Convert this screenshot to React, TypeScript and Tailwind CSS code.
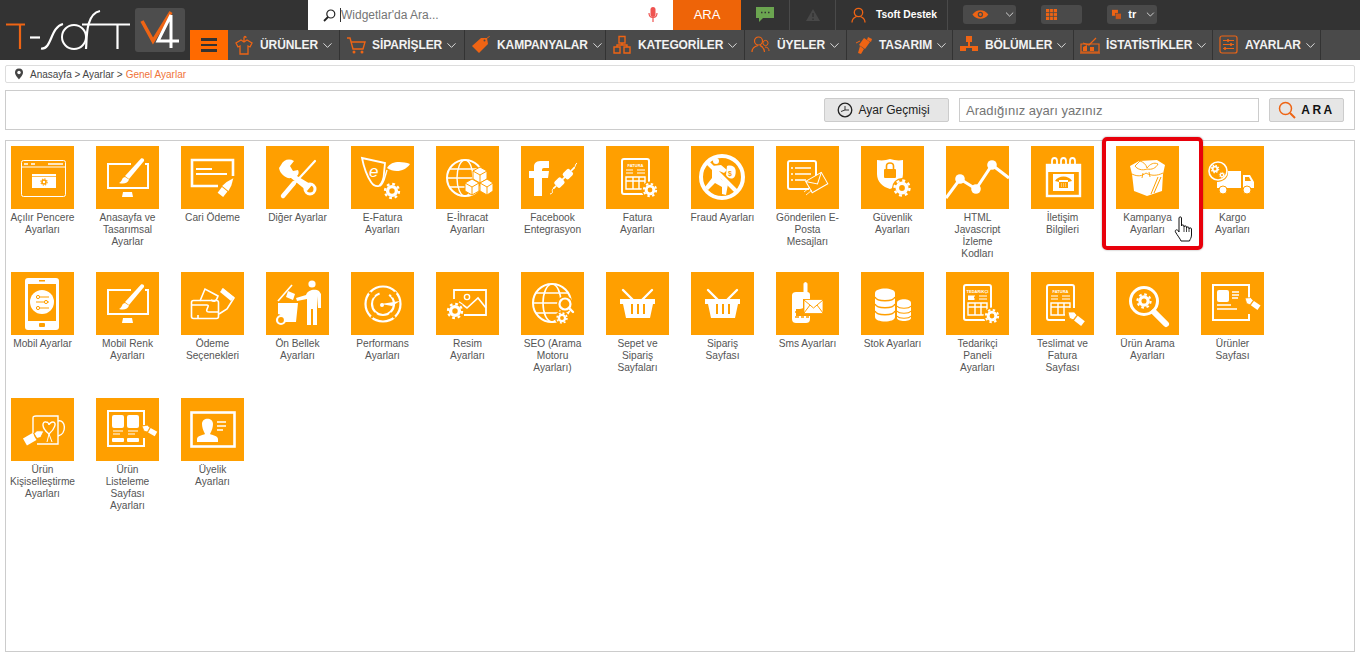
import React from 'react';
import { ChevronDown } from 'lucide-react';

const O = '#ff9f00';
const W = '#fff';
const ACC = '#ee6414';

// small shared pieces for the tile drawings
const Gear = ({ x, y, r, c = W, halo = false }: { x: number; y: number; r: number; c?: string; halo?: boolean }) => {
  const tr = r * 0.88;
  const d = (2 * Math.PI * tr) / 16;
  return (
    <g>
      {halo && <circle cx={x} cy={y} r={r + 1.5} fill={O} />}
      <circle cx={x} cy={y} r={r * 0.55} fill="none" stroke={c} strokeWidth={r * 0.42} />
      <circle cx={x} cy={y} r={tr} fill="none" stroke={c} strokeWidth={r * 0.28} strokeDasharray={`${d} ${d}`} />
    </g>
  );
};

const Nib = ({ x, y, rot = 0, s = 1 }: { x: number; y: number; rot?: number; s?: number }) => (
  <g transform={`translate(${x} ${y}) rotate(${rot}) scale(${s})`}>
    <path d="M0 0 L5 -4 L9 -3 L9 3 L5 4 Z" fill={W} stroke={O} strokeWidth="0.8" />
    <rect x="10" y="-3" width="9" height="6" fill={W} />
  </g>
);

const Monitor = () => (
  <>
    <path d="M35 18 H12 V42 H52 V18 H49 M30 42" fill="none" stroke={W} strokeWidth="2" />
    <path d="M27 46 H36 L37 51 H26 Z" fill={W} />
    <path d="M45 12.5 C47 12 48.5 13 48 15 L33 33 L29 30 Z" fill={W} />
    <path d="M29 31 C25 32 27 35 23 37 C28 38.5 32 37 33 33.5 Z" fill={W} />
  </>
);

const Basket = () => (
  <>
    <path d="M17 18 L28 29 M46 18 L35 29" stroke={W} strokeWidth="2.4" strokeLinecap="round" />
    <path d="M14 27 H49 V32 H47 L44 46 H20 L17 32 H14 Z" fill={W} />
    <path d="M26 32 V42 M32 32 V42 M38 32 V42" stroke={O} strokeWidth="2" />
  </>
);

const DocTable = ({ title, x = 16 }: { title: string; x?: number }) => (
  <g transform={`translate(${x} 0)`}>
    <rect x="1" y="13" width="27" height="35" rx="2" fill="none" stroke={W} strokeWidth="2" />
    <text x="14.5" y="21" textAnchor="middle" fontSize="4" fontWeight="700" fill={W} fontFamily="Liberation Sans, sans-serif">{title}</text>
    <path d="M5 24 H12 M16 24 H24 M5 27 H12 M16 27 H24" stroke={W} strokeWidth="1" />
    <path d="M5 31 H24 V43 H5 Z M5 35 H24 M12 31 V43 M18 31 V43" fill="none" stroke={W} strokeWidth="1.4" />
  </g>
);

const icons: Record<string, React.ReactNode> = {
  popup: (
    <>
      <rect x="10.5" y="14.5" width="44" height="36" rx="2" fill="none" stroke={W} />
      <path d="M10 21 H55" stroke={W} strokeWidth="1" />
      <path d="M13 18 H17 M20 18 H24 M37 18 H52" stroke={W} strokeWidth="1.4" />
      <rect x="21" y="28" width="24" height="14" fill={W} />
      <path d="M21 30.5 H45" stroke={O} strokeWidth="0.7" />
      <Gear x={33} y={36} r={3.6} c={O} />
    </>
  ),
  monitor: <Monitor />,
  check: (
    <>
      <path d="M37 40 H11 V14 H52 V30" fill="none" stroke={W} strokeWidth="2.6" />
      <path d="M15 23 H31 M15 28 H46" stroke={W} strokeWidth="2" />
      <g transform="translate(40 48) rotate(-52)">
        <rect x="-1" y="-3.5" width="7" height="7" fill={W} />
        <path d="M7 -4 L13 -3 L20 0 L13 3 L7 4 Z" fill={W} />
      </g>
    </>
  ),
  tools: (
    <>
      <path d="M49 15 L26 40" stroke={W} strokeWidth="2.2" strokeLinecap="round" />
      <path d="M28 37 L17 50" stroke={W} strokeWidth="4.4" strokeLinecap="round" />
      <path d="M15 19 C17 14 23 12 28 15 L24 20 L27 25 L32 24 C33 26 33 28 31 30 L46 39 L41 45 L25 32 C20 33 14 28 13 22 Z" fill={W} />
      <circle cx="44" cy="43" r="5" fill="none" stroke={W} strokeWidth="3" />
    </>
  ),
  efatura: (
    <>
      <path d="M11 12 L34 17 L33 27 C33 32 31 38 28 40 C24 41 22 39 20 36 C16 30 13 22 11 12 Z" fill="none" stroke={W} strokeWidth="1.8" />
      <text x="18" y="31" fontSize="17" fontStyle="italic" fill={W} fontFamily="Liberation Sans, sans-serif">e</text>
      <path d="M36 22 C40 15 50 15 59 18 C54 26 43 27 36 22 Z" fill={W} />
      <path d="M29 40 C33 38 34 30 36 24" fill="none" stroke={W} strokeWidth="1.4" />
      <Gear x={41} y={45} r={8} />
    </>
  ),
  ihracat: (
    <>
      <circle cx="29" cy="32" r="18" fill="none" stroke={W} strokeWidth="2" />
      <ellipse cx="29" cy="32" rx="8" ry="18" fill="none" stroke={W} strokeWidth="1.4" />
      <path d="M11 32 H47 M14 23 H44 M14 41 H44" stroke={W} strokeWidth="1.4" />
      <g stroke={O} strokeWidth="1">
        <path d="M37 25 L44 21 L51 25 L51 33 L44 37 L37 33 Z" fill={W} />
        <path d="M29 37 L36 33 L43 37 L43 45 L36 49 L29 45 Z" fill={W} />
        <path d="M44 37 L51 33 L57 37 L57 45 L51 49 L44 45 Z" fill={W} />
        <path d="M37 25 L44 29 L51 25 M44 29 V37 M29 37 L36 41 L43 37 M36 41 V49 M44 37 L51 41 L57 37 M51 41 V49" fill="none" />
      </g>
    </>
  ),
  facebook: (
    <>
      <path d="M13 50 V32 H8 V25 H13 V21 C13 16 16 15 21 15 H28 V22 H23 C21 22 21 23 21 25 H28 L27 32 H21 V50 Z" fill={W} />
      <g transform="rotate(-45 43 32)">
        <rect x="32" y="28" width="9" height="8" rx="2" fill={W} />
        <rect x="44" y="28" width="9" height="8" rx="2" fill={W} />
        <path d="M28 32 H32 M40 32 H45 M53 32 H58" stroke={W} strokeWidth="1.6" />
      </g>
      <path d="M33 42 C29 44 34 47 29 48 M53 22 C55 20 54 18 56 17" fill="none" stroke={W} />
    </>
  ),
  fatura: (
    <>
      <DocTable title="FATURA" x={15} />
      <Gear x={44} y={44} r={7} halo />
    </>
  ),
  fraud: (
    <>
      <circle cx="31" cy="31" r="21" fill="none" stroke={W} strokeWidth="4" />
      <path d="M16 16 L46 46" stroke={W} strokeWidth="4" />
      <circle cx="25" cy="15" r="3" fill={W} />
      <path d="M21 20 L30 19 L36 24 L33 27 L28 25 L30 33 L37 38 L35 49 L31 48 L31 41 L24 37 L17 44 L14 41 L21 32 Z" fill={W} />
      <path d="M36 20 C44 18 46 24 44 30 C42 34 37 33 35 29 Z" fill={W} />
      <text x="37" y="30" fontSize="7" fontWeight="700" fill={O} fontFamily="Liberation Sans, sans-serif">$</text>
    </>
  ),
  mail: (
    <>
      <path d="M33 43 H14 C13 43 12 42 12 41 V17 C12 16 13 15 14 15 H38 C39 15 40 16 40 17 V30" fill="none" stroke={W} strokeWidth="2" />
      <path d="M19 22 H35 M19 28 H35 M19 34 H30 M15 22 H17 M15 28 H17 M15 34 H17" stroke={W} strokeWidth="1.6" />
      <g transform="rotate(-30 41 37)" stroke={W} fill={O}>
        <rect x="32" y="30" width="18" height="13" />
        <path d="M32 30 L41 38 L50 30" fill="none" />
      </g>
      <path d="M28 46 L34 41 M30 49 L36 44" stroke={W} strokeWidth="0.8" />
    </>
  ),
  shield: (
    <>
      <path d="M16 14 C22 15 25 14 29 13 C33 14 37 15 42 14 V28 C42 36 35 41 29 43 C22 41 16 36 16 28 Z" fill={W} />
      <rect x="23" y="23" width="12" height="9" rx="1" fill={O} />
      <path d="M25.5 23 V20 C25.5 16 32.5 16 32.5 20 V23" fill="none" stroke={O} strokeWidth="1.6" />
      <Gear x={41} y={42} r={8.5} halo />
    </>
  ),
  chart: (
    <>
      <path d="M0 52 L14 33 L30 43 L46 19 L63 32" fill="none" stroke={W} strokeWidth="3" />
      <circle cx="14" cy="33" r="4.8" fill={W} />
      <circle cx="30" cy="43" r="4.8" fill={W} />
      <circle cx="46" cy="19" r="4.8" fill={W} />
    </>
  ),
  calendar: (
    <>
      <rect x="16" y="19" width="33" height="31" fill="none" stroke={W} strokeWidth="2.4" />
      <path d="M15 19 H50 V26 H15 Z" fill={W} />
      <path d="M21 21 V15 C21 11 26 11 26 15 V21 M30 21 V15 C30 11 35 11 35 15 V21 M39 21 V15 C39 11 44 11 44 15 V21" fill="none" stroke={W} strokeWidth="1.8" />
      <rect x="22" y="28" width="21" height="17" fill={W} />
      <path d="M24 35 C27 29 38 29 41 35 L37 36 V34 H28 V36 Z" fill={O} />
      <rect x="28" y="36" width="9" height="6" fill={O} />
      <path d="M30 38 H35 M30 40 H35" stroke={W} strokeWidth="0.8" strokeDasharray="1 1" />
    </>
  ),
  gift: (
    <>
      <path d="M14 20 L23 15 L41 14 L49 19 L47 28 L46 45 L31 50 L18 45 L16 28 Z" fill={W} />
      <path d="M24 15 C27 16 30 18 31 22 C34 18 38 16 42 18 C40 22 36 24 31 23 C26 25 21 23 19 20 Z" fill={W} stroke={O} strokeWidth="0.9" />
      <path d="M16 28 C22 31 26 30 30 27 C35 30 41 30 47 27" fill="none" stroke={O} strokeWidth="0.9" />
      <path d="M42 31 L35 48 M45 31 L38 47" stroke={O} strokeWidth="1" />
      <path d="M27 27 L26 32 M33 26 L34 31" stroke={O} strokeWidth="0.9" />
    </>
  ),
  truck: (
    <>
      <circle cx="17" cy="25" r="9" fill={O} stroke={W} strokeWidth="1.6" />
      <Gear x={14} y={23} r={4.2} />
      <Gear x={21} y={29} r={3} />
      <path d="M27 25 H40 V42 H16 V36 C22 36 28 32 27 25 Z" fill={W} />
      <path d="M42 29 H49 L53 36 V42 H42 Z" fill={W} />
      <path d="M44 31 H48 L50 35 H44 Z" fill={O} />
      <circle cx="22" cy="44" r="4" fill={W} stroke={O} />
      <circle cx="46" cy="44" r="4" fill={W} stroke={O} />
    </>
  ),
  phone: (
    <>
      <rect x="14" y="6" width="34" height="52" rx="3" fill={W} />
      <rect x="17" y="12" width="28" height="37" fill={O} />
      <circle cx="31" cy="30" r="12" fill={W} />
      <path d="M25 25 H38 M25 30 H38 M25 36 H38" stroke={O} strokeWidth="1" />
      <circle cx="27" cy="25" r="1.6" fill={W} stroke={O} />
      <circle cx="35" cy="30" r="1.6" fill={W} stroke={O} />
      <circle cx="27" cy="36" r="1.6" fill={W} stroke={O} />
      <rect x="28" y="51" width="6" height="4" rx="1" fill={O} />
      <rect x="28" y="8" width="6" height="1.5" fill={O} />
    </>
  ),
  payment: (
    <>
      <rect x="10.5" y="28.5" width="27" height="18" rx="2" fill="none" stroke={W} strokeWidth="1.6" />
      <path d="M11 33 H26 C30 33 22 40 28 40 H37 M17 46 V43" fill="none" stroke={W} strokeWidth="1.6" />
      <path d="M19 29 L24 17 L37 24 C35 30 33 30 30 28" fill="none" stroke={W} strokeWidth="1.6" />
      <path d="M41 17 L53 26 L46 37 L38 42" fill="none" stroke={W} strokeWidth="1.6" />
      <path d="M42 16 L53 25 L50 29 L39 20 Z" fill={W} />
    </>
  ),
  trash: (
    <>
      <path d="M12 29 L26 13" stroke={W} strokeWidth="1.6" />
      <path d="M22 19 L29 22 L27 28 L20 25 Z" fill={W} />
      <path d="M12 31 H32 L30 50 H18 C18 45 14 42 12 42 Z" fill={W} />
      <circle cx="15" cy="48" r="4" fill={O} stroke={W} strokeWidth="2.2" />
      <circle cx="46" cy="12" r="3.6" fill={W} />
      <path d="M30 26 L40 23 C42 17 50 17 53 19 L55 22 V36 H52 L51 24 V53 H47 V37 H45 V53 H41 V27 L31 29 Z" fill={W} />
    </>
  ),
  speed: (
    <>
      <circle cx="32" cy="32" r="17.5" fill="none" stroke={W} strokeWidth="2.2" />
      <circle cx="32" cy="32" r="11" fill="none" stroke={W} strokeWidth="2.2" strokeDasharray="48 10" />
      <path d="M18 20 L23 25 M45 20 L41 25 M20 46 L25 41 M44 46 L39 41" stroke={O} strokeWidth="2.4" />
      <path d="M30 32 L49 29 L41 34 Z" fill={W} />
      <circle cx="31" cy="33" r="2" fill={W} />
    </>
  ),
  image: (
    <>
      <path d="M18 27 V18 H50 V43 H28" fill="none" stroke={W} strokeWidth="1.8" />
      <circle cx="31" cy="25" r="2.6" fill="none" stroke={W} strokeWidth="1.4" />
      <path d="M23 30 L31 36 L42 26 L50 36" fill="none" stroke={W} strokeWidth="1.6" />
      <Gear x={19} y={39} r={8} halo />
    </>
  ),
  seo: (
    <>
      <circle cx="31" cy="31" r="19" fill="none" stroke={W} strokeWidth="2" />
      <ellipse cx="31" cy="31" rx="9" ry="19" fill="none" stroke={W} strokeWidth="1.6" />
      <path d="M12 31 H50 M15 21 H47 M15 41 H47" stroke={W} strokeWidth="1.6" />
      <circle cx="44" cy="32" r="8" fill={O} />
      <circle cx="44" cy="32" r="5.5" fill={O} stroke={W} strokeWidth="2.2" />
      <path d="M48 36 L52 40" stroke={W} strokeWidth="2.4" strokeLinecap="round" />
      <Gear x={41} y={46} r={5.6} halo />
    </>
  ),
  basket: <Basket />,
  sms: (
    <>
      <path d="M28 21 V12 C28 10 31 10 31 12 V21" fill={W} stroke={W} />
      <path d="M16 23 C16 21 18 20 20 20 H31 C33 20 34 21 34 23 V27 H27 V36 C27 37 21 37 20 37 V44 H34 V47 C34 50 32 51 30 51 H20 C18 51 16 50 16 47 Z" fill={W} />
      <rect x="28" y="27.5" width="19" height="14" fill={W} stroke={O} strokeWidth="0.8" />
      <path d="M28 28 L37.5 36 L47 28 M28 41 L34 33 M47 41 L41 33" fill="none" stroke={O} strokeWidth="1" />
      <path d="M19 40 H23 M25 45 H28 M30 45 H33 M19 45 H23" stroke={O} strokeWidth="1.6" />
    </>
  ),
  stock: (
    <>
      <path d="M14 21 C14 15 34 15 34 21 V45 C34 51 14 51 14 45 Z" fill={W} />
      <path d="M14 25 C16 30 32 30 34 25 M14 32 C16 37 32 37 34 32 M14 39 C16 44 32 44 34 39" fill="none" stroke={O} strokeWidth="1.4" />
      <path d="M36 31 C36 26 50 26 50 31 V46 C50 50 36 50 36 46 Z" fill={W} />
      <path d="M36 34 C38 37 48 37 50 34 M36 39 C38 42 48 42 50 39 M36 44 C38 47 48 47 50 44" fill="none" stroke={O} strokeWidth="1.2" />
    </>
  ),
  tedarik: (
    <>
      <DocTable title="TEDARİKÇİ" x={17} />
      <rect x="22" y="24" width="6" height="4" fill={W} />
      <Gear x={46} y={44} r={7} halo />
    </>
  ),
  teslimat: (
    <>
      <DocTable title="FATURA" x={15} />
      <rect x="34" y="36" width="14" height="14" fill={O} />
      <Nib x={37} y={40} rot={38} s={1} />
    </>
  ),
  search: (
    <>
      <circle cx="28" cy="29" r="13.5" fill="none" stroke={W} strokeWidth="3" />
      <path d="M38 40 L50 52" stroke={W} strokeWidth="6" strokeLinecap="round" />
      <Gear x={28} y={29} r={7.5} />
    </>
  ),
  product: (
    <>
      <path d="M48 27 V13 H12 V48 H48 V42" fill="none" stroke={W} strokeWidth="2" />
      <rect x="16" y="18" width="12" height="12" rx="2" fill={W} />
      <path d="M31 20 H38 M31 23 H38 M31 26 H37 M16 33 H30 M16 37 H36" stroke={W} strokeWidth="1.3" />
      <Nib x={44} y={26} rot={35} s={0.9} />
    </>
  ),
  mug: (
    <>
      <path d="M22 42 V20 C22 18 23 18 25 18 H47 V46 H26" fill="none" stroke={W} strokeWidth="1.4" />
      <path d="M47 23 C55 21 56 36 47 38" fill="none" stroke={W} strokeWidth="1.4" />
      <path d="M38 36 C30 30 31 23 35 24 C37 24 38 26 38 27 C38 26 40 24 42 24 C46 24 44 31 38 36 Z" fill="none" stroke={W} strokeWidth="1.4" />
      <path d="M38 36 L36 44 M38 36 L41 44" stroke={W} />
      <g transform="translate(33 33) rotate(150)">
        <path d="M0 0 L6 -4 L10 -3 L10 3 L6 4 Z" fill={W} stroke={O} />
        <rect x="11" y="-4" width="11" height="8" fill={W} />
      </g>
    </>
  ),
  list: (
    <>
      <path d="M48 27 V13 H12 V48 H48 V40" fill="none" stroke={W} strokeWidth="2" />
      <rect x="16" y="17" width="12" height="13" rx="2" fill={W} />
      <rect x="31" y="17" width="12" height="13" rx="2" fill={W} />
      <path d="M17 33 H27 M17 36 H24 M32 33 H42 M32 36 H39" stroke={W} strokeWidth="1.2" />
      <rect x="16" y="40" width="12" height="4" rx="1" fill={W} />
      <rect x="31" y="40" width="12" height="4" rx="1" fill={W} />
      <Nib x={46} y={28} rot={30} s={0.85} />
    </>
  ),
  member: (
    <>
      <rect x="10.5" y="14.5" width="43" height="34" fill="none" stroke={W} strokeWidth="2.6" />
      <path d="M16 44 V41 C16 38 22 37 24 36 C22 32 21 29 21 26 C21 19 32 19 32 26 C32 29 31 32 29 36 C31 37 37 38 37 41 V44 Z" fill={W} />
      <path d="M36 24 H45 M36 28 H45 M36 32 H42" stroke={W} strokeWidth="1.4" />
    </>
  ),
};

// line breaks follow the reference
const tiles: [string, string][] = [
  ['Açılır Pencere\nAyarları', 'popup'],
  ['Anasayfa ve\nTasarımsal\nAyarlar', 'monitor'],
  ['Cari Ödeme', 'check'],
  ['Diğer Ayarlar', 'tools'],
  ['E-Fatura\nAyarları', 'efatura'],
  ['E-İhracat\nAyarları', 'ihracat'],
  ['Facebook\nEntegrasyon', 'facebook'],
  ['Fatura\nAyarları', 'fatura'],
  ['Fraud Ayarları', 'fraud'],
  ['Gönderilen E-\nPosta\nMesajları', 'mail'],
  ['Güvenlik\nAyarları', 'shield'],
  ['HTML\nJavascript\nİzleme\nKodları', 'chart'],
  ['İletişim\nBilgileri', 'calendar'],
  ['Kampanya\nAyarları', 'gift'],
  ['Kargo\nAyarları', 'truck'],
  ['Mobil Ayarlar', 'phone'],
  ['Mobil Renk\nAyarları', 'monitor'],
  ['Ödeme\nSeçenekleri', 'payment'],
  ['Ön Bellek\nAyarları', 'trash'],
  ['Performans\nAyarları', 'speed'],
  ['Resim\nAyarları', 'image'],
  ['SEO (Arama\nMotoru\nAyarları)', 'seo'],
  ['Sepet ve\nSipariş\nSayfaları', 'basket'],
  ['Sipariş\nSayfası', 'basket'],
  ['Sms Ayarları', 'sms'],
  ['Stok Ayarları', 'stock'],
  ['Tedarikçi\nPaneli\nAyarları', 'tedarik'],
  ['Teslimat ve\nFatura\nSayfası', 'teslimat'],
  ['Ürün Arama\nAyarları', 'search'],
  ['Ürünler\nSayfası', 'product'],
  ['Ürün\nKişiselleştirme\nAyarları', 'mug'],
  ['Ürün\nListeleme\nSayfası\nAyarları', 'list'],
  ['Üyelik\nAyarları', 'member'],
];

const navIcons: Record<string, React.ReactNode> = {
  shirt: <path d="M7 5 L2 8 L4 12 L6 11 V19 H14 V11 L16 12 L18 8 L13 5 L10 7 Z M10 7 V3 C10 1 12 1 12 3" fill="none" stroke={ACC} strokeWidth="1.3" />,
  cart: (
    <>
      <path d="M1 3 H4 L7 14 H17 L19 7 H5" fill="none" stroke={ACC} strokeWidth="1.4" />
      <circle cx="8" cy="17" r="1.5" fill={ACC} />
      <circle cx="16" cy="17" r="1.5" fill={ACC} />
    </>
  ),
  tag: (
    <>
      <path d="M1 11 L10 3 L16 3 L17 9 L8 18 Z" fill={ACC} />
      <path d="M15 4 C17 2 19 2 18 1" fill="none" stroke={ACC} />
      <circle cx="13.5" cy="5.5" r="1" fill="#4a4a4a" />
    </>
  ),
  tree: <path d="M7 1.5 H13 V8 H7 Z M2 12 H8 V18 H2 Z M12 12 H18 V18 H12 Z M10 8 V10 H5 V12 M10 10 H15 V12" fill="none" stroke={ACC} strokeWidth="1.4" />,
  users: (
    <>
      <circle cx="7.5" cy="6" r="4" fill="none" stroke={ACC} strokeWidth="1.2" />
      <path d="M1 17 C1 12 5 11 7 10.5 M9 10.5 C10 11 13 12 13.5 17" fill="none" stroke={ACC} strokeWidth="1.2" />
      <circle cx="14.5" cy="8" r="2.6" fill="none" stroke={ACC} strokeWidth="1" />
      <path d="M14 12 C17 12 18 14 18 16" fill="none" stroke={ACC} strokeWidth="1" />
    </>
  ),
  brush: (
    <>
      <path d="M11 3 L17 7 L12 14 L6 10 Z" fill={ACC} />
      <path d="M15 2 L19 4 L18 7 L14 5 Z" fill={ACC} />
      <path d="M7 11 L11 14 L8 19 L5 18 Z" fill={ACC} />
      <path d="M3 8 L7 6" stroke={ACC} />
    </>
  ),
  org: <path d="M7 1 H13 V7 H11 V11 H19 V16 H13 V13 H7 V16 H1 V11 H9 V7 H7 Z" fill={ACC} />,
  stats: (
    <>
      <path d="M1 9 H19 V17 H1 Z" fill="none" stroke={ACC} strokeWidth="1.2" />
      <path d="M3 16 V12 L7 10 V16 M10 16 V12 H14 V16" fill={ACC} />
      <path d="M3 8 L9 10 L16 3" fill="none" stroke={ACC} strokeWidth="1.2" />
      <path d="M0 18 H20" stroke={ACC} strokeWidth="1.2" />
    </>
  ),
  sliders: (
    <>
      <rect x="1" y="1" width="17" height="17" rx="2" fill="none" stroke={ACC} strokeWidth="1.2" />
      <path d="M4 5.5 H15 M4 9.5 H15 M4 13.5 H15" stroke={ACC} />
      <path d="M9 4 V7 M12 8 V11 M6 12 V15" stroke={ACC} strokeWidth="1.6" />
    </>
  ),
};

const nav: { label: string; icon: string; w: string }[] = [
  { label: 'ÜRÜNLER', icon: 'shirt', w: 'w-[112px]' },
  { label: 'SİPARİŞLER', icon: 'cart', w: 'w-[125px]' },
  { label: 'KAMPANYALAR', icon: 'tag', w: 'w-[141px]' },
  { label: 'KATEGORİLER', icon: 'tree', w: 'w-[139px]' },
  { label: 'ÜYELER', icon: 'users', w: 'w-[102px]' },
  { label: 'TASARIM', icon: 'brush', w: 'w-[106px]' },
  { label: 'BÖLÜMLER', icon: 'org', w: 'w-[121px]' },
  { label: 'İSTATİSTİKLER', icon: 'stats', w: 'w-[139px]' },
  { label: 'AYARLAR', icon: 'sliders', w: 'w-[108px]' },
];

function Logo() {
  return (
    <svg width="190" height="60" viewBox="0 0 190 60" className="shrink-0">
      <path d="M6 24.5 H25 M20 24.5 V49" fill="none" stroke={ACC} strokeWidth="2.2" />
      <path d="M30 37.5 H40" stroke="#fff" strokeWidth="2.2" />
      <path d="M41 48.5 C52 50 50 27 63 24" fill="none" stroke="#fff" strokeWidth="2.2" />
      <circle cx="74" cy="37" r="12" fill="none" stroke="#fff" strokeWidth="2" />
      <path d="M86 49 C87 40 85 14 100 11" fill="none" stroke="#fff" strokeWidth="2.2" />
      <path d="M82 24.5 H130 M117.5 24.5 V49" fill="none" stroke="#fff" strokeWidth="2.2" />
      <rect x="135" y="8" width="50" height="44" rx="3" fill="#4d4d4d" />
      <path d="M142 21 L153 41 L171 12" fill="none" stroke={ACC} strokeWidth="3.6" />
      <path d="M171 15 L158 41 H179 M171 15 V48" fill="none" stroke="#fff" strokeWidth="3" />
    </svg>
  );
}

function TopBar() {
  return (
    <div className="flex h-[30px] items-stretch pl-[118px]">
      <div className="relative flex w-[365px] items-center bg-white pl-[15px]">
        <svg width="13" height="13" viewBox="0 0 13 13" fill="none" stroke="#222" strokeWidth="1.2">
          <circle cx="7.8" cy="5" r="4" />
          <path d="M5 8 L1 12" strokeWidth="1.8" />
        </svg>
        <span className="ml-[4px] h-[14px] w-px bg-[#333]" />
        <span className="text-[12px] text-[#757575]">Widgetlar'da Ara...</span>
        <svg className="absolute left-[340px] top-[7px]" width="10" height="16" viewBox="0 0 10 16">
          <rect x="2.5" y="0" width="5" height="10" rx="2.5" fill="#ef5350" />
          <path d="M1 6 C1 12 9 12 9 6 M5 11 V15" fill="none" stroke="#ef5350" strokeWidth="1.2" />
        </svg>
      </div>
      <div className="flex w-[68px] items-center justify-center bg-[#ee6408] text-[13px] text-white">ARA</div>
      <div className="flex w-[49px] items-center justify-center border-r border-[#4a4a4a]">
        <svg width="18" height="16" viewBox="0 0 18 16">
          <path d="M0 0 H18 V11 H7 L3 15 V11 H0 Z" fill="#6ba550" />
          <path d="M5 5.5 H6.5 M8.5 5.5 H10 M12 5.5 H13.5" stroke="#333" strokeWidth="1.6" />
        </svg>
      </div>
      <div className="flex w-[46px] items-center justify-center border-r border-[#4a4a4a]">
        <svg width="16" height="14" viewBox="0 0 16 14">
          <path d="M8 1 L15 13 H1 Z" fill="#484848" />
          <path d="M8 5 V9 M8 10.5 V12" stroke="#333" strokeWidth="1.4" />
        </svg>
      </div>
      <div className="flex w-[112px] items-center border-r border-[#4a4a4a] pl-[15px]">
        <svg width="15" height="16" viewBox="0 0 15 16" fill="none" stroke={ACC} strokeWidth="1.3">
          <circle cx="7.5" cy="5.5" r="4.2" />
          <path d="M1 15.5 C1 11 4 10.5 5.5 9.5 M9.5 9.5 C11 10.5 14 11 14 15.5" />
        </svg>
        <span className="ml-[10px] whitespace-nowrap text-[10.3px] font-bold text-white">Tsoft Destek</span>
      </div>
      <div className="ml-[15px] mt-[5px] flex h-[19px] w-[53px] items-center rounded-[3px] bg-[#4a4a4a] pl-[9px]">
        <svg width="19" height="11" viewBox="0 0 19 11">
          <path d="M0.5 5.5 C5 -1 14 -1 18.5 5.5 C14 12 5 12 0.5 5.5 Z" fill={ACC} />
          <circle cx="9.5" cy="5.5" r="3" fill="#4a4a4a" />
          <circle cx="9.5" cy="5.5" r="1.6" fill={ACC} />
        </svg>
        <ChevronDown size={15} strokeWidth={1.5} className="ml-[14px] text-[#eee]" />
      </div>
      <div className="ml-[25px] mt-[5px] flex h-[19px] w-[41px] items-center rounded-[3px] bg-[#4a4a4a] pl-[5px]">
        <svg width="11" height="11" viewBox="0 0 11 11">
          <rect width="11" height="11" fill={ACC} />
          <path d="M3.6 0 V11 M7.4 0 V11 M0 3.6 H11 M0 7.4 H11" stroke="#4a4a4a" strokeWidth="0.8" />
        </svg>
      </div>
      <div className="ml-[25px] mt-[5px] flex h-[19px] w-[50px] items-center rounded-[3px] bg-[#4a4a4a] pl-[5px]">
        <svg width="11" height="11" viewBox="0 0 11 11">
          <rect width="7" height="7" fill={ACC} />
          <rect x="4" y="4" width="7" height="7" fill="#c9561a" stroke="#4a4a4a" strokeWidth="0.6" />
        </svg>
        <span className="ml-[7px] text-[11px] font-bold text-white">tr</span>
        <ChevronDown size={15} strokeWidth={1.5} className="ml-[8px] text-[#eee]" />
      </div>
    </div>
  );
}

function NavBar() {
  return (
    <div className="flex h-[30px] bg-[#4a4a4a]">
      <div className="flex w-[38px] items-center justify-center bg-[#ff6a00]">
        <span className="flex w-[16px] flex-col gap-[3px]">
          <span className="h-[2.5px] bg-[#333]" />
          <span className="h-[2.5px] bg-[#333]" />
          <span className="h-[2.5px] bg-[#333]" />
        </span>
      </div>
      {nav.map((n) => (
        <div key={n.label} className={`flex items-center border-r border-[#333] pl-[6px] ${n.w}`}>
          <svg width="20" height="20" viewBox="0 0 20 20" className="shrink-0">{navIcons[n.icon]}</svg>
          <span className="ml-[6px] whitespace-nowrap text-[12px] font-bold tracking-[-0.1px] text-[#f2f2f2]">{n.label}</span>
          <ChevronDown size={15} strokeWidth={1.5} className="ml-[2px] shrink-0 text-[#e5e5e5]" />
        </div>
      ))}
    </div>
  );
}

function SearchPanel() {
  return (
    <div className="mx-[5px] mt-[7px] flex h-[40px] items-center justify-end border border-[#ccc] pr-[10px]">
      <button className="flex h-[24px] w-[125px] items-center justify-center rounded-[2px] border border-[#ccc] bg-[#e6e6e6] pr-[6px] text-[12px] text-[#222]">
        <svg width="16" height="16" viewBox="0 0 16 16" fill="none" stroke="#222" className="mr-[5px]">
          <circle cx="8" cy="8" r="6.8" strokeWidth="1.3" />
          <path d="M8 4 V8 L4 9.5 M8 8 H12" strokeWidth="0.9" />
        </svg>
        Ayar Geçmişi
      </button>
      <div className="ml-[10px] flex h-[24px] w-[300px] items-center border border-[#ccc] bg-white pl-[6px] pt-[2px] text-[13px] text-[#757575]">
        Aradığınız ayarı yazınız
      </div>
      <button className="ml-[10px] flex h-[24px] w-[75px] items-center justify-center rounded-[2px] border border-[#ccc] bg-[#e6e6e6] text-[12px] font-bold tracking-[2.5px] text-[#111]">
        <svg width="18" height="18" viewBox="0 0 18 18" fill="none" stroke={ACC} strokeWidth="1.5" className="mr-[5px]">
          <circle cx="7.5" cy="7.5" r="6" />
          <path d="M12 12 L17 17" strokeWidth="2" />
        </svg>
        ARA
      </button>
    </div>
  );
}

function Tile({ label, icon }: { label: string; icon: string }) {
  return (
    <div className="flex h-[126px] w-[73px] flex-col items-center">
      <div className="h-[63px] w-[63px] bg-[#ff9f00]">
        <svg width="63" height="63" viewBox="0 0 63 63">{icons[icon]}</svg>
      </div>
      <div className="mt-[3px] w-full whitespace-pre text-center text-[10.2px] leading-[12px] text-[#555]">{label}</div>
    </div>
  );
}

export default function App() {
  return (
    <div className="h-[657px] w-[1360px] overflow-hidden bg-white font-['Liberation_Sans',Arial,sans-serif]">
      <header className="flex h-[60px] bg-[#333]">
        <Logo />
        <div className="flex-1">
          <TopBar />
          <NavBar />
        </div>
      </header>

      <div className="mx-[5px] mt-[5px] flex h-[18px] items-center rounded-[2px] border border-[#ddd] pl-[8px] text-[10px] text-[#444]">
        <svg width="10" height="12" viewBox="0 0 10 12" className="mr-[6px] shrink-0">
          <path d="M5 0.5 C2 0.5 1 2.5 1 4.5 C1 7 4 10 5 11.5 C6 10 9 7 9 4.5 C9 2.5 8 0.5 5 0.5 Z" fill="#444" />
          <circle cx="5" cy="4.5" r="1.7" fill="#fff" />
        </svg>
        <span>Anasayfa &gt; Ayarlar &gt; </span>
        <span className="ml-[3px] text-[#f0743a]">Genel Ayarlar</span>
      </div>

      <SearchPanel />

      <div className="relative mx-[5px] mt-[10px] h-[512px] border border-[#ccc] pt-[5px]">
        <div className="grid grid-cols-[repeat(15,85px)]">
          {tiles.map(([label, icon]) => (
            <Tile key={label} label={label} icon={icon} />
          ))}
        </div>
        {/* highlight drawn over the Kampanya tile */}
        <div className="absolute left-[1096px] top-[-4px] h-[113px] w-[101px] rounded-[5px] border-[4px] border-[#e8000b] shadow-[0_0_2px_rgba(0,0,0,0.4)]" />
        <svg className="absolute left-[1168px] top-[75px]" width="20" height="26" viewBox="0 0 20 26">
          <path
            d="M5 2 C5 0.5 7.5 0.5 7.5 2 V10 C7.5 8.5 10 8.5 10 10 V11 C10 9.5 12.5 9.5 12.5 11 V12 C12.5 10.5 15 10.5 15 12 V13 C15 11.5 17.5 11.5 17.5 13 V19 C17.5 22 16 23 15.5 25 H7 C6.5 23 3 19 1.5 16 C0.5 14 3 13 4 14.5 L5 16 Z"
            fill="#fff"
            stroke="#111"
            strokeWidth="1"
            strokeLinejoin="round"
          />
          <path d="M10 11 V16 M12.5 12 V16 M15 13 V16" stroke="#111" strokeWidth="0.8" />
        </svg>
      </div>
    </div>
  );
}
